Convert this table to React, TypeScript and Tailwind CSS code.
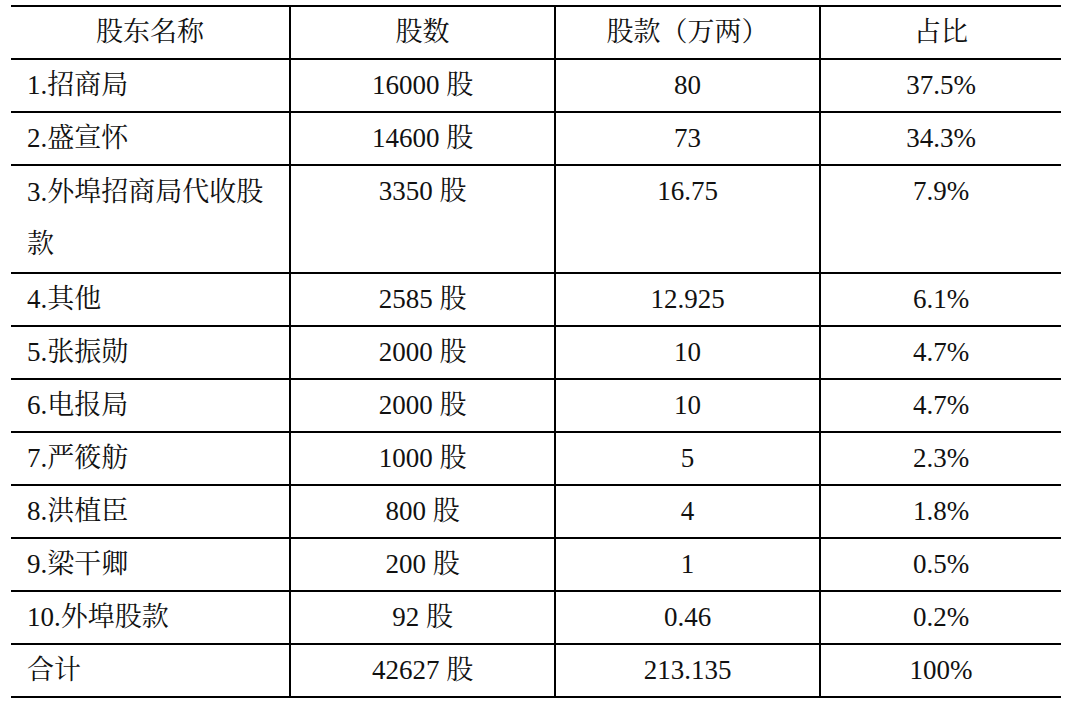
const rows: [React.ReactNode, string, string, string][] = [
  ["1.招商局", "16000 股", "80", "37.5%"],
  ["2.盛宣怀", "14600 股", "73", "34.3%"],
  [
    <>
      3.外埠招商局代收股
      <br />款
    </>,
    "3350 股",
    "16.75",
    "7.9%",
  ],
  ["4.其他", "2585 股", "12.925", "6.1%"],
  ["5.张振勋", "2000 股", "10", "4.7%"],
  ["6.电报局", "2000 股", "10", "4.7%"],
  ["7.严筱舫", "1000 股", "5", "2.3%"],
  ["8.洪植臣", "800 股", "4", "1.8%"],
  ["9.梁干卿", "200 股", "1", "0.5%"],
  ["10.外埠股款", "92 股", "0.46", "0.2%"],
  ["合计", "42627 股", "213.135", "100%"],
];

export default function App() {
  return (
    <div className="min-h-screen w-full bg-white pl-[11px] pt-[5px] font-['Liberation_Serif','Times_New_Roman','Noto_Serif_CJK_SC','Noto_Sans_CJK_SC',serif] text-[#111]">
      <table className="w-[1050px] table-fixed border-collapse text-[27px] leading-[51px]">
        <colgroup>
          <col className="w-[279px]" />
          <col className="w-[265px]" />
          <col className="w-[265px]" />
          <col className="w-[241px]" />
        </colgroup>
        <thead>
          <tr className="border-y-2 border-black">
            <th className="p-0 text-center font-normal">股东名称</th>
            <th className="border-l-2 border-black p-0 text-center font-normal">股数</th>
            <th className="border-l-2 border-black p-0 text-center font-normal">股款（万两）</th>
            <th className="border-l-2 border-black p-0 text-center font-normal">占比</th>
          </tr>
        </thead>
        <tbody>
          {rows.map((r, i) => (
            <tr key={i} className="border-b-2 border-black">
              <td className={`p-0 pl-[16px] align-top ${i === 2 ? "pb-[2px] leading-[52px]" : ""}`}>{r[0]}</td>
              <td className="border-l-2 border-black p-0 text-center align-top">{r[1]}</td>
              <td className="border-l-2 border-black p-0 text-center align-top">{r[2]}</td>
              <td className="border-l-2 border-black p-0 text-center align-top">{r[3]}</td>
            </tr>
          ))}
        </tbody>
      </table>
    </div>
  );
}
